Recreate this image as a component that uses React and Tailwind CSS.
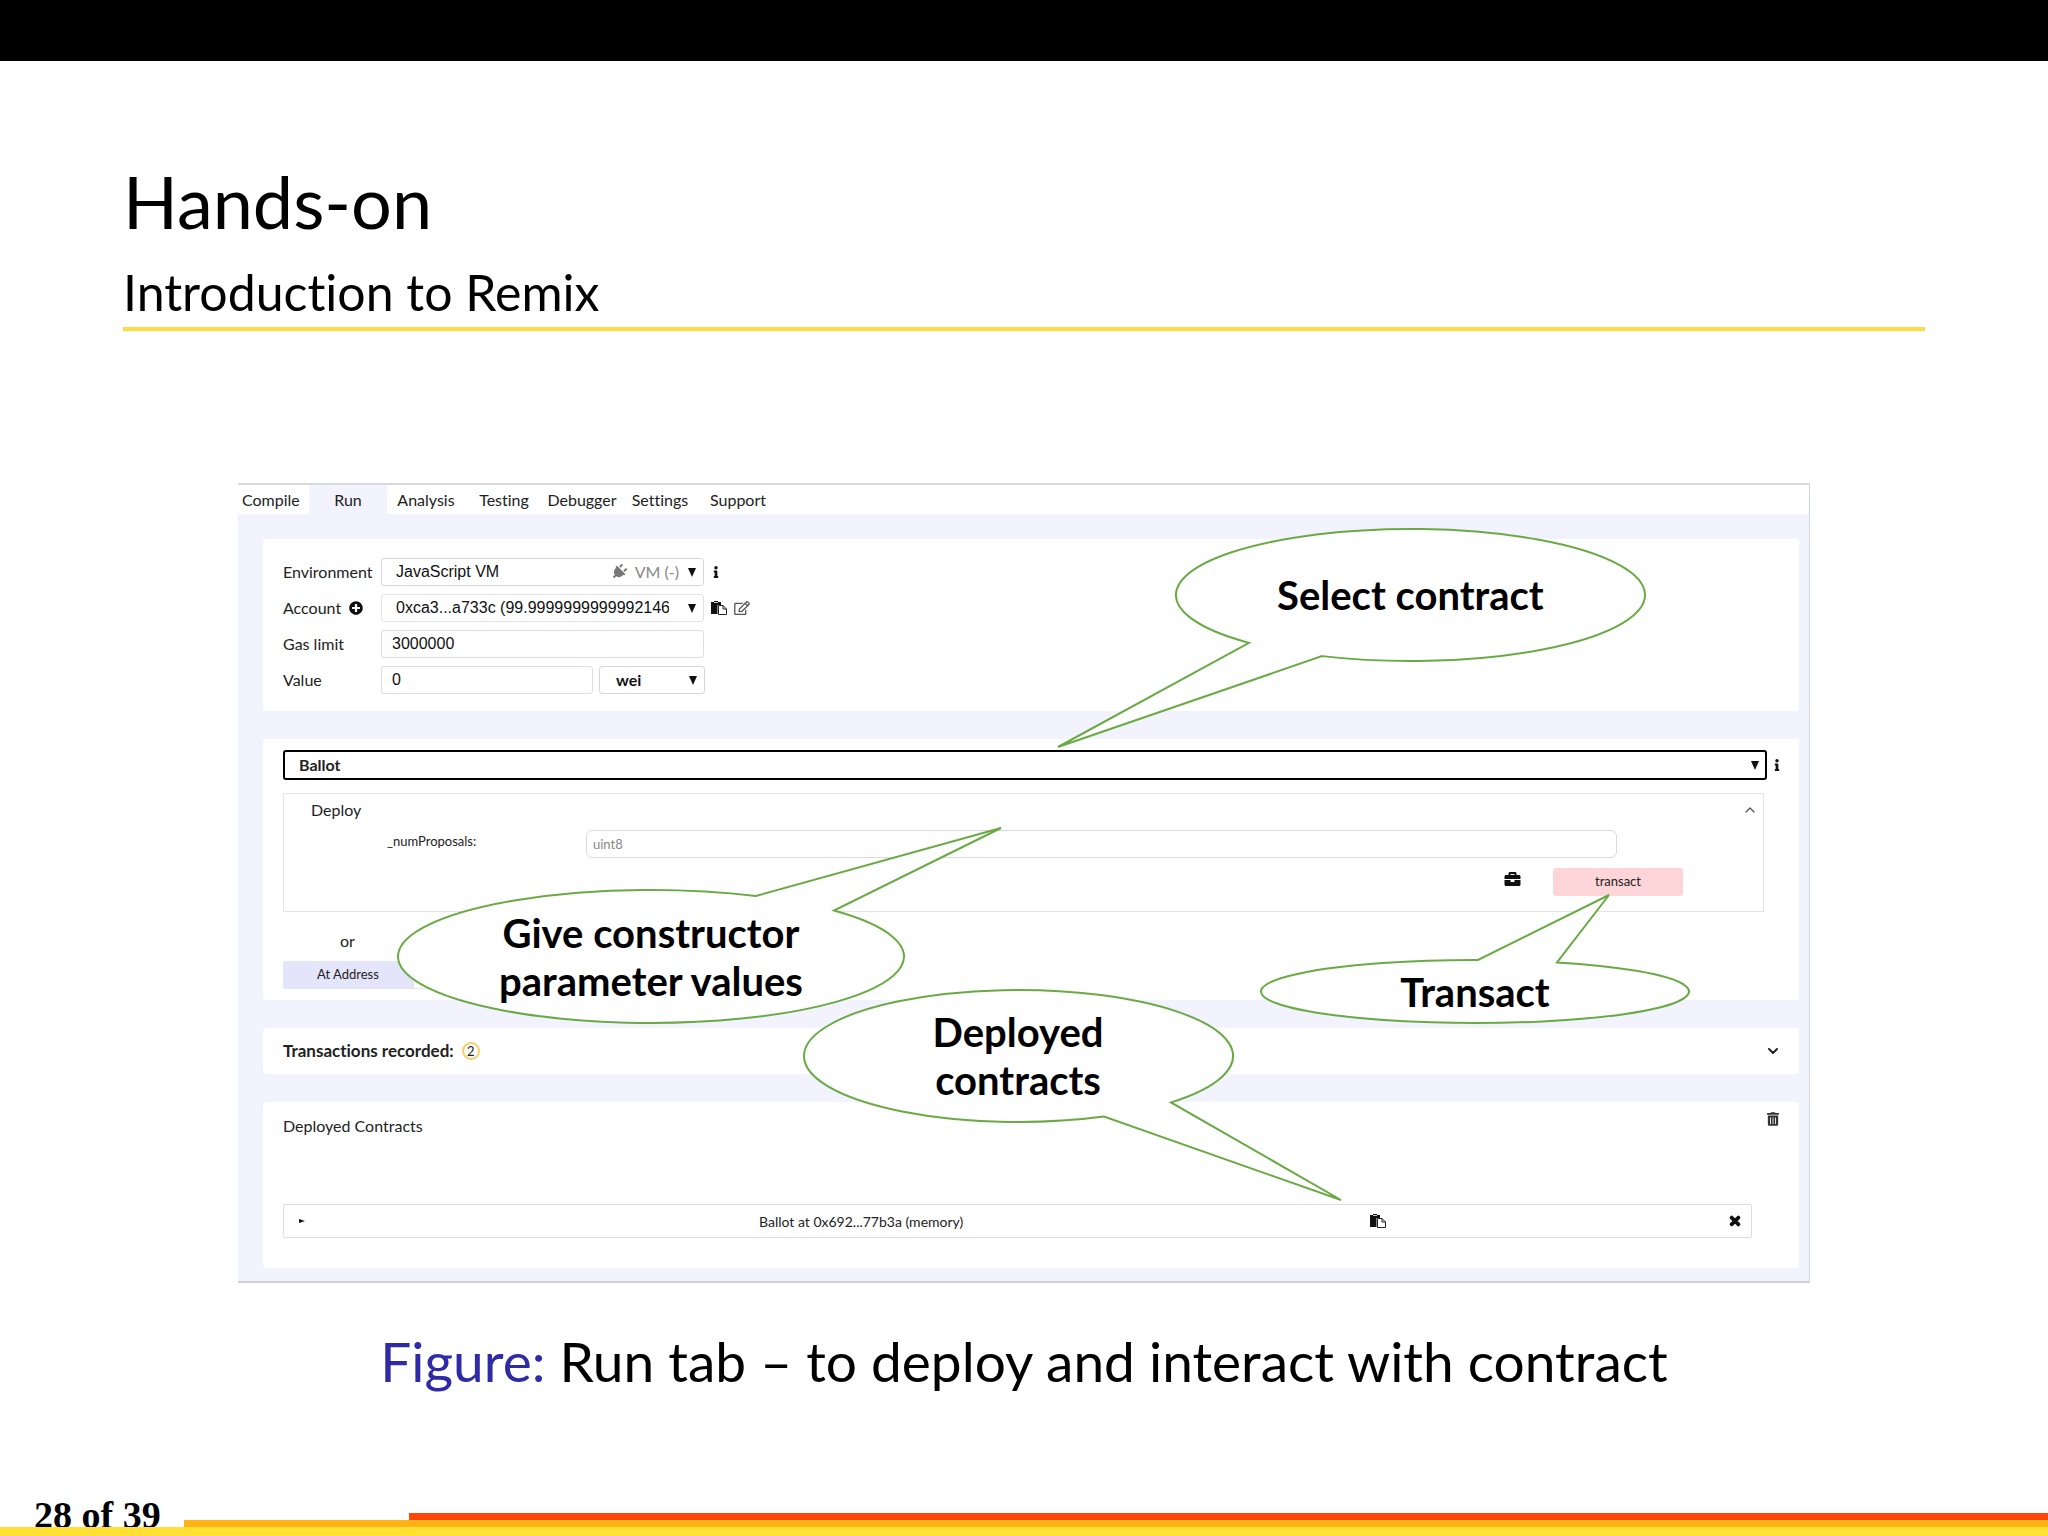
import { useState } from "react";
import {
  FaBriefcase,
  FaInfo,
  FaPlug,
  FaPlusCircle,
  FaRegEdit,
  FaTimes,
  FaTrashAlt,
} from "react-icons/fa";
import { FiChevronDown, FiChevronUp } from "react-icons/fi";

const tabs = [
  { name: "Compile", className: "w-[71px] pl-1 text-left" },
  { name: "Run", className: "w-[78px] text-center" },
  { name: "Analysis", className: "w-[78px] text-center" },
  { name: "Testing", className: "w-[78px] text-center" },
  { name: "Debugger", className: "w-[78px] text-center" },
  { name: "Settings", className: "w-[78px] text-center" },
  { name: "Support", className: "w-[78px] text-center" },
];

const PasteIcon = () => (
  <svg viewBox="0 0 16 14" className="h-[14px] w-4">
    <path d="M0 1h3V0h4v1h3v3H6.500v9H0z" fill="#111" />
    <path d="M3 1.500h4" stroke="#fff" strokeWidth="0.800" />
    <path
      d="M7.500 4.500h4.500l3.500 3.500v5.500h-8z"
      fill="#fff"
      stroke="#222"
      strokeWidth="1"
    />
    <path d="M12 4.500v3.500h3.500" fill="none" stroke="#222" strokeWidth="1" />
  </svg>
);

const Arrow = () => (
  <svg viewBox="0 0 10 9" className="h-[9px] w-[10px]">
    <path d="M1 0h8L5 9z" fill="#111" />
  </svg>
);

const SelectBox = ({ id, label, options, className, boxClass, children }) => (
  <div className={`relative ${boxClass}`}>
    <select
      id={id}
      aria-label={label}
      className={`h-full w-full appearance-none rounded-[3px] bg-white ${className}`}
    >
      {options.map((o) => (
        <option key={o}>{o}</option>
      ))}
    </select>
    <span className="pointer-events-none absolute inset-y-0 right-[7px] flex items-center gap-1">
      {children}
      <Arrow />
    </span>
  </div>
);

const Card = ({ className, children }) => (
  <section className={`rounded-[4px] bg-white ${className}`}>{children}</section>
);

// Outline of a speech bubble: a w x h ellipse with a tail.
// The tail leaves the ellipse between x = start and x = end, on the top or the bottom side.
const bubblePath = ({ w, h, start, end, side, tip }) => {
  const rx = w / 2;
  const ry = h / 2;
  const edge = (x) => {
    const dy = ry * Math.sqrt(1 - ((x - rx) / rx) ** 2);
    return side === "top" ? ry - dy : ry + dy;
  };
  return `M${start} ${edge(start)}A${rx} ${ry} 0 1 1 ${end} ${edge(end)}L${tip[0]} ${tip[1]}Z`;
};

const Callout = ({ className, shape, children }) => (
  <div
    className={`pointer-events-none absolute flex items-center justify-center text-center text-[40px] leading-[48px] font-bold text-black ${className}`}
  >
    <svg className="absolute inset-0 h-full w-full overflow-visible">
      <path d={bubblePath(shape)} fill="#fff" stroke="#6aaa45" strokeWidth="2" />
    </svg>
    <span className="relative">{children}</span>
  </div>
);

const inputClass =
  "h-7 rounded-[3px] border border-[#dedee4] bg-white px-[10px] font-['Liberation_Sans',sans-serif] text-[16px] text-[#111]";

const RunPanel = () => {
  const [activeTab, setActiveTab] = useState("Run");
  const [gasLimit, setGasLimit] = useState("3000000");
  const [value, setValue] = useState("0");

  return (
    <div className="relative border-t-2 border-r border-b-2 border-t-[#d9d9de] border-r-[#d4d4e2] border-b-[#cfcfdb] bg-[#f2f3fe] pb-[13px] text-[16px] text-[#222]">
      <nav className="flex h-[29px] bg-white">
        {tabs.map((tab) => (
          <button
            key={tab.name}
            onClick={() => setActiveTab(tab.name)}
            className={`h-[29px] ${tab.className} ${
              activeTab === tab.name ? "bg-[#f2f3fe]" : "bg-white"
            }`}
          >
            {tab.name}
          </button>
        ))}
      </nav>

      <div className="flex flex-col gap-7 pt-[25px] pr-[10px] pl-[25px]">
        <Card className="h-[172px] pt-[19px] pl-5">
          <div className="grid grid-cols-[98px_1fr] items-center gap-y-2">
            <label htmlFor="environment">Environment</label>
            <div className="flex items-center gap-2">
              <SelectBox
                id="environment"
                options={["JavaScript VM", "Injected Web3", "Web3 Provider"]}
                boxClass="h-7 w-[323px]"
                className="border border-[#d6d6dc] pl-[14px] font-['Liberation_Sans',sans-serif] text-[16px] text-[#111]"
              >
                <FaPlug className="h-4 w-4 rotate-45 text-[#777]" />
                <span className="pr-1 pl-1 text-[16px] text-[#888]">VM (-)</span>
              </SelectBox>
              <FaInfo className="h-3 w-2 text-[#111]" />
            </div>

            <label htmlFor="account" className="flex items-center gap-2">
              Account <FaPlusCircle className="h-[14px] w-[14px] text-[#111]" />
            </label>
            <div className="flex items-center gap-[7px]">
              <SelectBox
                id="account"
                options={["0xca3...a733c (99.999999999999214647 ether)"]}
                boxClass="h-7 w-[323px]"
                className="border border-[#e2e2e8] pr-[34px] pl-[14px] font-['Liberation_Sans',sans-serif] text-[16px] text-[#111]"
              />
              <PasteIcon />
              <FaRegEdit className="h-[14px] w-4 text-[#555]" />
            </div>

            <label htmlFor="gas">Gas limit</label>
            <input
              id="gas"
              value={gasLimit}
              onChange={(e) => setGasLimit(e.target.value)}
              className={`w-[323px] ${inputClass}`}
            />

            <label htmlFor="value">Value</label>
            <div className="flex gap-[6px]">
              <input
                id="value"
                value={value}
                onChange={(e) => setValue(e.target.value)}
                className={`w-[212px] ${inputClass}`}
              />
              <SelectBox
                id="unit"
                label="Unit"
                options={["wei", "gwei", "finney", "ether"]}
                boxClass="h-7 w-[106px]"
                className="border border-[#d6d6dc] pl-4 text-[16px] font-bold text-[#111]"
              />
            </div>
          </div>
        </Card>

        <Card className="h-[261px] pt-[11px] pr-[18px] pl-5">
          <div className="flex items-center gap-[6px]">
            <SelectBox
              id="contract"
              label="Contract"
              options={["Ballot"]}
              boxClass="h-[30px] flex-1"
              className="border-2 border-black pl-[14px] text-[16px] font-bold text-[#222]"
            />
            <FaInfo className="h-3 w-2 text-[#111]" />
          </div>

          <div className="mt-[13px] mr-[17px] h-[119px] border border-[#e4e4ea] pt-[5px]">
            <div className="flex h-[22px] items-center justify-between pr-[5px] pl-[27px]">
              Deploy
              <FiChevronUp className="h-4 w-4 text-[#555]" />
            </div>
            <div className="mt-[9px] flex pr-[146px] pl-[103px]">
              <label htmlFor="proposals" className="w-[199px] text-[13px] leading-[22px]">
                _numProposals:
              </label>
              <input
                id="proposals"
                placeholder="uint8"
                className="h-7 flex-1 rounded-[6px] border border-[#d9d9df] px-[6px] text-[13px] placeholder:text-[#888]"
              />
            </div>
            <div className="mt-[10px] flex gap-8 pr-[80px]">
              <FaBriefcase className="mt-[3px] ml-auto h-4 w-[17px] text-[#111]" />
              <button className="h-7 w-[130px] rounded-[3px] bg-[#fdd5d8] text-[13px] text-[#222]">
                transact
              </button>
            </div>
          </div>

          <div className="flex h-[49px] w-[129px] items-end justify-center pb-2">
            or
          </div>
          <div className="flex">
            <button className="h-7 w-[130px] rounded-l-[3px] bg-[#e4e5fb] text-[13px]">
              At Address
            </button>
            <input
              aria-label="Load contract from address"
              className="h-7 w-[300px] border border-[#e4e4ea] px-2"
            />
          </div>
        </Card>

        <Card className="flex h-[46px] items-center pr-[18px] pl-5 text-[17px] font-bold">
          Transactions recorded:
          <span className="ml-2 flex h-[18px] w-[18px] items-center justify-center rounded-full border-2 border-[#f8cf62] text-[13px] leading-none font-normal">
            2
          </span>
          <FiChevronDown className="ml-auto h-4 w-4 stroke-3 text-[#222]" />
        </Card>

        <Card className="h-[166px] pt-[10px] pr-5 pl-5">
          <div className="flex items-start justify-between">
            <h2 className="pt-1 leading-5">Deployed Contracts</h2>
            <FaTrashAlt className="h-[14px] w-3 text-[#333]" />
          </div>
          <div className="mt-[68px] mr-[27px] flex h-[34px] items-center rounded-[2px] border border-[#dfdce4] pr-[10px] pl-[15px]">
            <svg viewBox="0 0 6 6" className="h-[6px] w-[6px]">
              <path d="M0 1l6 2-6 2z" fill="#111" />
            </svg>
            <span className="flex-1 pl-[454px] text-[14px]">
              Ballot at 0x692...77b3a (memory)
            </span>
            <PasteIcon />
            <FaTimes className="ml-[343px] h-[14px] w-3 stroke-[40] text-[#111]" />
          </div>
        </Card>
      </div>

      <Callout
        className="top-[44px] left-[59.7%] h-[132px] w-[469px]"
        shape={{ w: 469, h: 132, start: 73, end: 146, side: "bottom", tip: [-118, 218] }}
      >
        Select contract
      </Callout>
      <Callout
        className="top-[405px] left-[160px] h-[133px] w-[506px]"
        shape={{ w: 506, h: 133, start: 436, end: 358, side: "top", tip: [603, -62] }}
      >
        Give constructor
        <br />
        parameter values
      </Callout>
      <Callout
        className="top-[505px] left-[36%] h-[132px] w-[429px]"
        shape={{ w: 429, h: 132, start: 300, end: 367, side: "bottom", tip: [537, 210] }}
      >
        Deployed
        <br />
        contracts
      </Callout>
      <Callout
        className="top-[475px] right-[120px] h-[63px] w-[428px]"
        shape={{ w: 428, h: 63, start: 296, end: 217, side: "top", tip: [348, -65] }}
      >
        Transact
      </Callout>
    </div>
  );
};

const App = () => {
  return (
    <div className="flex min-h-screen flex-col bg-white font-['Lato','Open_Sans',sans-serif] text-black [font-variant-ligatures:none]">
      <div className="h-[61px] bg-black" />

      <header className="mx-[123px] border-b-4 border-[#ffdb43] pt-[92px]">
        <h1 className="text-[72px] leading-[96px]">Hands-on</h1>
        <p className="pt-4 pb-2 text-[50px] leading-[54px]">Introduction to Remix</p>
      </header>

      <figure className="mx-[238px] mt-[152px]">
        <RunPanel />
        <figcaption className="mt-[44px] text-center text-[55px] leading-[68px]">
          <span className="text-[#2f2ba6]">Figure:</span> Run tab – to deploy and
          interact with contract
        </figcaption>
      </figure>

      <footer className="mt-auto">
        <div className="flex h-[36px] items-end">
          <span className="h-[36px] w-[184px] pl-[34px] font-['Liberation_Serif',serif] text-[38px] leading-[48px] font-bold">
            28 of 39
          </span>
          <div className="flex-1">
            <div className="ml-[225px] h-[7px] bg-[#ff450c]" />
            <div className="h-[7px] bg-[#fdb316]" />
          </div>
        </div>
        <div className="relative h-[9px] bg-[#ffe033]" />
      </footer>
    </div>
  );
};

export default App;
